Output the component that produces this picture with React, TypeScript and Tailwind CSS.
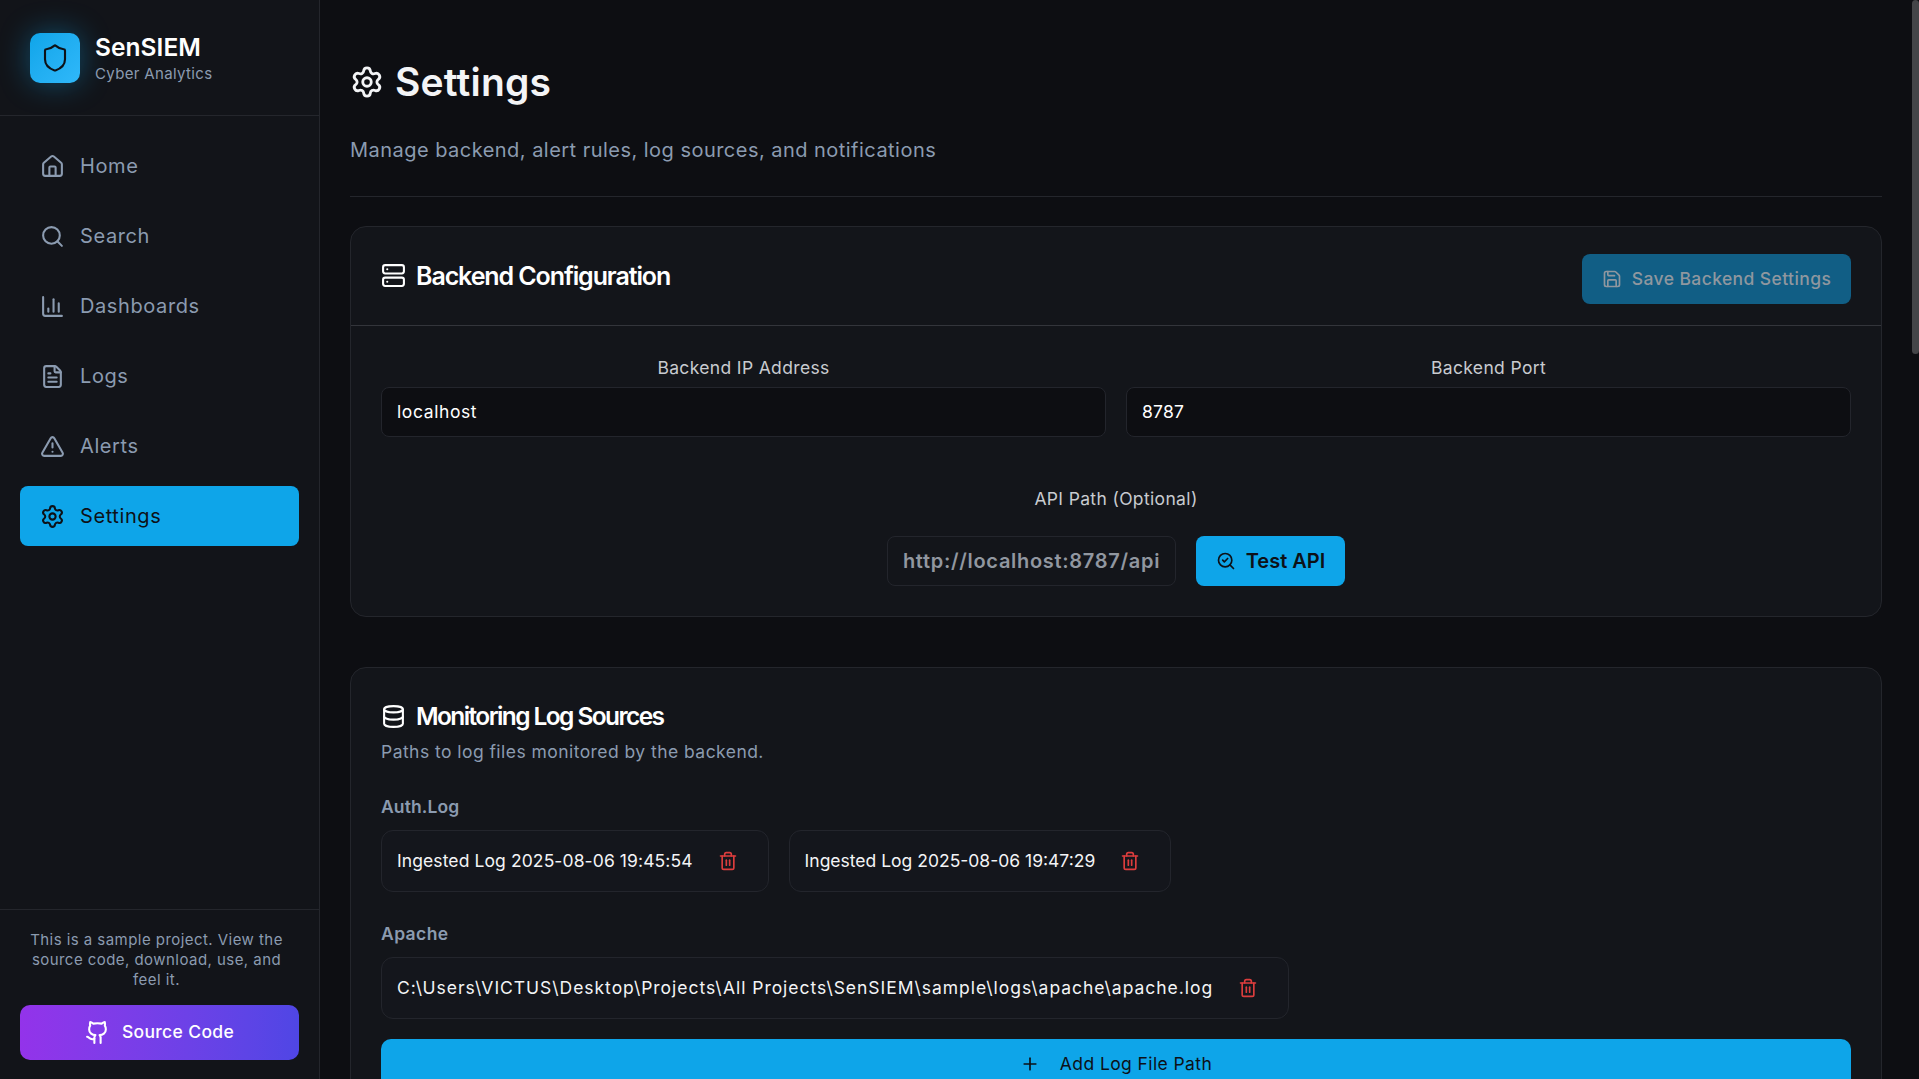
import { House, Search, ChartColumn, FileText, TriangleAlert, Settings, Shield, Server, Database, Save, SearchCheck, Trash2, Plus } from "lucide-react";

const nav = [
  { label: "Home", Icon: House },
  { label: "Search", Icon: Search },
  { label: "Dashboards", Icon: ChartColumn },
  { label: "Logs", Icon: FileText },
  { label: "Alerts", Icon: TriangleAlert },
  { label: "Settings", Icon: Settings, active: true },
];

function GithubIcon() {
  return (
    <svg width="25" height="25" viewBox="0 0 24 24" fill="none" stroke="currentColor" strokeWidth="2" strokeLinecap="round" strokeLinejoin="round">
      <path d="M15 22v-4a4.8 4.8 0 0 0-1-3.5c3 0 6-2 6-5.5.08-1.25-.27-2.48-1-3.5.28-1.15.28-2.35 0-3.5 0 0-1 0-3 1.5-2.64-.5-5.36-.5-8 0C6 2 5 2 5 2c-.3 1.15-.3 2.35 0 3.5A5.403 5.403 0 0 0 4 9c0 3.5 3 5.5 6 5.5-.39.49-.68 1.05-.85 1.65-.17.6-.22 1.23-.15 1.85v4" />
      <path d="M9 18c-4.51 2-5-2-7-2" />
    </svg>
  );
}

function LogChip({ text, tracking }: { text: string; tracking: string }) {
  return (
    <div className="flex h-[62px] items-center gap-[25px] rounded-[12px] border border-[#23252c] bg-[#14161c] pl-[15px] pr-[30px] text-[17.5px] text-[#f3f4f6]">
      <span className={`whitespace-nowrap ${tracking}`}>{text}</span>
      <Trash2 size={20} className="text-[#dc3d3d]" />
    </div>
  );
}

export default function App() {
  return (
    <div className="flex h-screen overflow-hidden bg-[#0d0e12] font-['Inter',sans-serif]">
      <aside className="flex h-screen w-[320px] shrink-0 flex-col border-r border-[#24262c] bg-[#121419]">
        <div className="flex h-[116px] shrink-0 items-center gap-[15px] border-b border-[#24262c] pl-[30px]">
          <div className="flex h-[50px] w-[50px] items-center justify-center rounded-[10px] bg-gradient-to-br from-[#0ea5e9] to-[#2fb8fa] text-[#0d1117] shadow-[0_0_30px_rgba(14,165,233,0.4)]">
            <Shield size={30} strokeWidth={1.7} />
          </div>
          <div className="flex flex-col">
            <span className="text-[24.5px] font-semibold leading-[30px] tracking-[0.05px] text-white">SenSIEM</span>
            <span className="mt-[2px] text-[15px] leading-[20px] tracking-[0.35px] text-[#8b9bb0]">Cyber Analytics</span>
          </div>
        </div>
        <nav className="flex flex-1 flex-col gap-[10px] p-[20px]">
          {nav.map(({ label, Icon, active }) => (
            <div
              key={label}
              className={`flex h-[60px] items-center gap-[15px] rounded-[8px] pl-[20px] text-[20px] tracking-[0.6px] ${active ? "bg-[#0ea5e9] text-[#0d1117]" : "text-[#8b9bb0]"}`}
            >
              <Icon size={25} strokeWidth={2} className={active ? "text-[#0d1117]" : "text-[#8b9bb0]"} />
              <span>{label}</span>
            </div>
          ))}
        </nav>
        <div className="flex h-[170px] shrink-0 flex-col gap-[15px] border-t border-[#24262c] px-[20px] pt-[20px]">
          <p className="pl-[4px] pr-[10px] text-center text-[15px] leading-[20px] tracking-[0.45px] text-[#8b9bb0]">
            This is a sample project. View the source code, download, use, and feel it.
          </p>
          <div className="flex h-[55px] items-center justify-center gap-[12px] rounded-[10px] bg-gradient-to-r from-[#9333ea] to-[#4f46e5] text-[17.5px] font-medium text-white">
            <GithubIcon />
            <span className="tracking-[0.35px]">Source Code</span>
          </div>
        </div>
      </aside>

      <main className="relative h-screen flex-1 overflow-hidden bg-[#0d0e12]">
        <div className="pl-[30px] pr-[37px] pt-[58px]">
          <div className="border-b border-[#24262c] pb-[32px]">
            <div className="flex items-center gap-[11px]">
              <Settings size={34} strokeWidth={2} className="text-[#f3f4f6]" />
              <h1 className="text-[39px] font-semibold leading-[48px] tracking-[0.2px] text-[#f3f4f6]">Settings</h1>
            </div>
            <p className="mt-[30px] text-[20px] leading-[28px] tracking-[0.47px] text-[#8b9bb0]">
              Manage backend, alert rules, log sources, and notifications
            </p>
          </div>

          <section className="mt-[29px] rounded-[16px] border border-[#24262c] bg-[#13151a]">
            <div className="flex h-[99px] items-center justify-between border-b border-[#33353b] pl-[30px] pr-[30px]">
              <div className="-mt-[1px] flex items-center gap-[10px]">
                <Server size={25} strokeWidth={2} className="text-white" />
                <h2 className="text-[25px] font-semibold leading-[32px] -tracking-[1.1px] text-white">Backend Configuration</h2>
              </div>
              <div className="mt-[6px] flex h-[50px] w-[269px] items-center justify-center gap-[10px] rounded-[8px] bg-[#115e85] text-[17.5px] font-medium text-[#8f979f]">
                <Save size={20} strokeWidth={2} />
                <span className="tracking-[0.4px]">Save Backend Settings</span>
              </div>
            </div>
            <div className="px-[30px] pb-[30px] pt-[30px]">
              <div className="grid grid-cols-2 gap-[20px]">
                <div className="flex flex-col gap-[7px]">
                  <label className="text-center text-[17.5px] leading-[24px] tracking-[0.35px] text-[#c8cbd0]">Backend IP Address</label>
                  <div className="flex h-[50px] items-center rounded-[8px] border border-[#23252c] bg-[#0d0e12] px-[15px] text-[17.5px] tracking-[0.6px] text-white">localhost</div>
                </div>
                <div className="flex flex-col gap-[7px]">
                  <label className="text-center text-[17.5px] leading-[24px] tracking-[0.35px] text-[#c8cbd0]">Backend Port</label>
                  <div className="flex h-[50px] items-center rounded-[8px] border border-[#23252c] bg-[#0d0e12] px-[15px] text-[17.5px] tracking-[0.2px] text-white">8787</div>
                </div>
              </div>
              <div className="mt-[50px] flex flex-col items-center">
                <label className="text-center text-[17.5px] leading-[24px] tracking-[0.35px] text-[#c8cbd0]">API Path (Optional)</label>
                <div className="mt-[25px] flex items-center gap-[20px]">
                  <div className="flex h-[50px] w-[289px] items-center justify-center rounded-[8px] border border-[#23252c] text-[20px] font-semibold tracking-[0.7px] text-[#9197a0]">http://localhost:8787/api</div>
                  <div className="flex h-[50px] w-[149px] items-center justify-center gap-[10px] rounded-[8px] bg-[#0ea5e9] text-[20px] font-semibold text-[#0d1117]">
                    <SearchCheck size={20} strokeWidth={2} />
                    <span>Test API</span>
                  </div>
                </div>
              </div>
            </div>
          </section>

          <section className="mt-[50px] rounded-[16px] border border-[#24262c] bg-[#13151a] px-[30px] pb-[30px] pt-[32px]">
            <div className="flex items-center gap-[10px]">
              <Database size={25} strokeWidth={2} className="text-white" />
              <h2 className="text-[24.5px] font-semibold leading-[32px] -tracking-[1.6px] text-white">Monitoring Log Sources</h2>
            </div>
            <p className="mt-[8px] text-[17.5px] leading-[24px] tracking-[0.45px] text-[#8b9bb0]">Paths to log files monitored by the backend.</p>

            <h3 className="mt-[31px] text-[17.5px] font-semibold leading-[24px] tracking-[0.1px] text-[#8b9bb0]">Auth.Log</h3>
            <div className="mt-[11px] flex gap-[20px]">
              <LogChip text="Ingested Log 2025-08-06 19:45:54" tracking="tracking-[0.1px]" />
              <LogChip text="Ingested Log 2025-08-06 19:47:29" tracking="tracking-[0px]" />
            </div>

            <h3 className="mt-[30px] text-[17.5px] font-semibold leading-[24px] tracking-[0.4px] text-[#8b9bb0]">Apache</h3>
            <div className="mt-[11px] flex">
              <LogChip text="C:\Users\VICTUS\Desktop\Projects\All Projects\SenSIEM\sample\logs\apache\apache.log" tracking="tracking-[0.97px]" />
            </div>

            <div className="mt-[20px] flex h-[50px] items-center justify-center gap-[20px] rounded-[10px] bg-[#0ea5e9] text-[17.5px] tracking-[0.4px] text-[#0d1117]">
              <Plus size={20} strokeWidth={2} />
              <span>Add Log File Path</span>
            </div>
          </section>
        </div>
        <div className="absolute right-0 top-0 h-[354px] w-[7px] rounded-[4px] bg-[#444548]" />
      </main>
    </div>
  );
}
